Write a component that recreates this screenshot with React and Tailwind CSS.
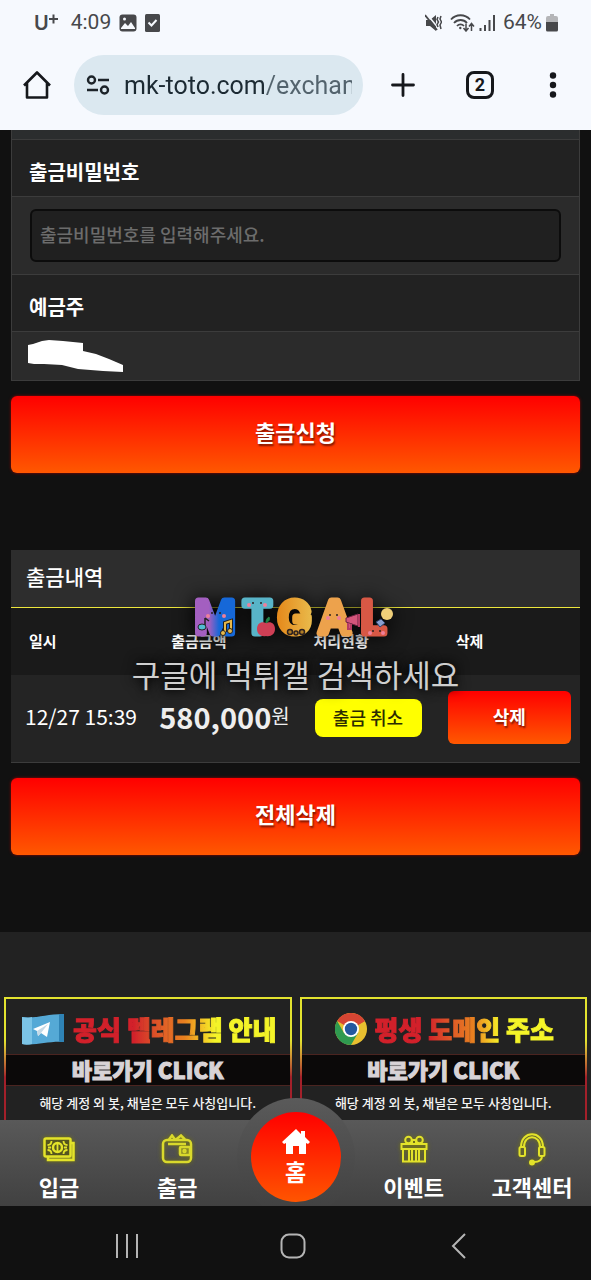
import { useState } from "react"

const panel = "border border-[#3c3c3c] bg-[#2b2b2b]"
const redButton =
    "w-full h-[77px] rounded-md bg-linear-to-b/srgb from-[#ff0000] to-[#ff5800] pb-1.5 text-white text-[22px] font-bold [text-shadow:1px_2px_2px_#7a1500] shadow-[0_0_3px_#a00000]"

function StatusBar() {
    return (
        <div className="flex h-[46px] items-center justify-between pl-[34px] pr-[33px] font-[Roboto,sans-serif] text-xl text-[#47484b]">
            <div className="flex items-center">
                <span className="font-[Inter,sans-serif] text-xl font-semibold leading-6">U</span>
                <svg width="10" height="20" viewBox="0 0 10 20" stroke="currentColor" strokeWidth="2">
                    <path d="M0 6h9M4.500 1.500v9" />
                </svg>
                <span className="ml-3 text-[21px]">4:09</span>
                <svg className="ml-2" width="18" height="18" viewBox="0 0 18 18">
                    <rect x="0.500" y="0.500" width="17" height="17" rx="3" fill="currentColor" />
                    <path d="M2 14l4-5 3 3 3-4 4 6v1H2z" fill="#f6f9fe" />
                    <circle cx="5.500" cy="5" r="1.500" fill="#f6f9fe" />
                </svg>
                <svg className="ml-2" width="15" height="18" viewBox="0 0 15 18">
                    <rect width="15" height="18" rx="1.500" fill="currentColor" />
                    <path d="M3.500 8.500l3 3 5-5.500" fill="none" stroke="#f6f9fe" strokeWidth="2" />
                </svg>
            </div>
            <div className="flex items-center">
                <svg width="17" height="18" viewBox="0 0 17 18" fill="currentColor">
                    <path d="M1 6h4l6-5v16l-6-5H1z" />
                    <path d="M1 -1l13 16" stroke="#f6f9fe" strokeWidth="1.500" />
                    <path d="M0 1l12 15" stroke="currentColor" strokeWidth="1.800" />
                    <path d="M13 3l-1 2.500L13.500 8 12 10.500l1 2.500M16 2l-1 3 1.500 3L15 11l1 4" fill="none" stroke="currentColor" strokeWidth="1.500" />
                </svg>
                <svg className="ml-2" width="25" height="18" viewBox="0 0 25 18" fill="none" stroke="currentColor" strokeWidth="1.800">
                    <path d="M1 5.500C6-.2 15-.2 20 5.500M4 9c3.600-4 9.500-4 13 0M7 12c2-2.200 5-2.200 7 0" />
                    <circle cx="10.300" cy="14" r="1.200" fill="currentColor" stroke="none" />
                    <path d="M16 9.500v7M13.500 14l2.500 3 2.500-3M21.500 17v-7M19 12.500l2.500-3 2.500 3" strokeWidth="1.500" />
                </svg>
                <svg className="ml-1" width="16" height="18" viewBox="0 0 16 18" stroke="currentColor" strokeWidth="2">
                    <path d="M1.500 17v-3M6 17V11M10.500 17V6M15 17V1" />
                </svg>
                <span className="ml-2 text-[21px]">64%</span>
                <svg className="ml-1" width="12" height="18" viewBox="0 0 12 18">
                    <path d="M4 0h4v2h2a2 2 0 0 1 2 2v4H0V4a2 2 0 0 1 2-2h2z" fill="#b4b5b8" />
                    <path d="M0 8h12v8a1.500 1.500 0 0 1-1.500 1.500h-9A1.500 1.500 0 0 1 0 16z" fill="currentColor" />
                </svg>
            </div>
        </div>
    )
}

function BrowserBar() {
    const [url, setUrl] = useState("mk-toto.com/exchange")

    return (
        <div className="flex items-center pt-[9px] pb-[15px] pl-[22px] pr-[30px] text-[#16181c]">
            <button aria-label="Home">
                <svg width="30" height="30" viewBox="0 0 30 30" fill="none" stroke="currentColor" strokeWidth="2.600" strokeLinejoin="round">
                    <path d="M2 15.500L15 2.500l13 13M5 13v14.500h20V13" />
                </svg>
            </button>
            <div className="ml-[22px] flex h-[60px] flex-1 items-center rounded-full bg-[#dbe8f0] pl-3 pr-[11px]">
                <svg width="24" height="22" viewBox="0 0 24 22" fill="none" stroke="#1c2329" strokeWidth="2.400" className="shrink-0">
                    <circle cx="5.500" cy="6" r="3.500" />
                    <path d="M12 6h11M1 16h11" />
                    <circle cx="18.500" cy="16" r="3.500" />
                </svg>
                <input
                    aria-label="Address"
                    className="ml-3.5 w-0 flex-1 bg-linear-to-r from-[#1c2a33] from-[142px] to-[#53636d] to-[142px] bg-clip-text pt-0.5 font-[Roboto,sans-serif] text-[25px] text-transparent outline-none"
                    value={url}
                    onChange={(e) => setUrl(e.target.value)}
                />
            </div>
            <button aria-label="New tab" className="ml-7">
                <svg width="24" height="24" viewBox="0 0 24 24" stroke="currentColor" strokeWidth="2.800" strokeLinecap="round">
                    <path d="M1.500 12h21M12 1.500v21" />
                </svg>
            </button>
            <button
                aria-label="Tabs"
                className="ml-[51px] h-7 w-7 rounded-lg border-[3px] border-current font-[Roboto,sans-serif] text-lg font-bold leading-5"
            >
                2
            </button>
            <button aria-label="Menu" className="ml-[51px] px-1">
                <svg width="8" height="26" viewBox="0 0 8 26" fill="currentColor">
                    <circle cx="4" cy="3.500" r="3.200" />
                    <circle cx="4" cy="13" r="3.200" />
                    <circle cx="4" cy="22.500" r="3.200" />
                </svg>
            </button>
        </div>
    )
}

function WithdrawForm() {
    const [password, setPassword] = useState("")

    return (
        <form onSubmit={(e) => e.preventDefault()}>
            <div className="border-x border-[#3c3c3c] bg-[#2b2d2e] h-[9px]"></div>
            <div className={panel}>
                <label htmlFor="password" className="flex h-14 items-center bg-[#222] px-[17px] pt-2 text-xl font-bold">
                    출금비밀번호
                </label>
                <div className="border-y border-[#3c3c3c] px-[18px] py-3">
                    <input
                        id="password"
                        type="password"
                        placeholder="출금비밀번호를 입력해주세요."
                        className="block h-[53px] w-full rounded-md border-2 border-[#0c0c0c] bg-[#202020] px-2 pb-1 text-lg outline-none placeholder:font-medium placeholder:text-[#6c6c6c]"
                        value={password}
                        onChange={(e) => setPassword(e.target.value)}
                    />
                </div>
                <div className="flex h-14 items-center bg-[#222] px-[17px] pt-2 text-xl font-bold">예금주</div>
                <div className="border-t border-[#3c3c3c] px-4 pt-2 pb-[7px]">
                    <svg width="95" height="33" viewBox="0 0 95 33" fill="#fff">
                        <path d="M0 5l5-1 9-3 7-1 14 1 20 2v8l13 3 13 5 14 6v7l-20-1-25-2-16-4-18-1H6l-6-1z" />
                    </svg>
                </div>
            </div>
            <button className={"mt-[15px] " + redButton}>출금신청</button>
        </form>
    )
}

function Mascots() {
    return (
        <svg width="204" height="60" viewBox="0 -5 204 60" className="overflow-visible drop-shadow-[0_0_10px_#000]" role="img" aria-label="MTGAL">
            <defs>
                <linearGradient id="m">
                    <stop offset="0.350" stopColor="#a35fc0" />
                    <stop offset="0.600" stopColor="#1668d8" />
                </linearGradient>
                <linearGradient id="g" x1="0" y1="0" x2="1" y2="0">
                    <stop offset="0" stopColor="#e58a1c" />
                    <stop offset="1" stopColor="#e9b94a" />
                </linearGradient>
            </defs>
            <g fontFamily="Inter, sans-serif" fontWeight="500" fontSize="44" strokeWidth="7" strokeLinejoin="round">
                <text x="1" y="39" fill="url(#m)" stroke="url(#m)">M</text>
                <text x="49" y="39" fill="#58b4c8" stroke="#58b4c8">T</text>
                <text x="84" y="39" fill="url(#g)" stroke="url(#g)">G</text>
                <text x="125" y="39" fill="#eda24c" stroke="#eda24c">A</text>
                <text x="167" y="39" fill="#d85845" stroke="#d85845">L</text>
            </g>
            {/* faces */}
            <g fill="#2b2020">
                <circle cx="18" cy="19" r="1" /><circle cx="26" cy="19" r="1" />
                <circle cx="59" cy="9" r="1" /><circle cx="67" cy="9" r="1" />
                <circle cx="136" cy="21" r="1" /><circle cx="143" cy="21" r="1" />
                <circle cx="179" cy="37" r="1" /><circle cx="186" cy="37" r="1" />
            </g>
            <g fill="#ee7f9a">
                <circle cx="14" cy="22" r="2" /><circle cx="30" cy="22" r="2" />
                <circle cx="55" cy="11" r="2" /><circle cx="71" cy="11" r="2" />
                <circle cx="134" cy="24" r="2" /><circle cx="145" cy="24" r="2" />
                <circle cx="176" cy="39" r="2" /><circle cx="189" cy="39" r="2" />
            </g>
            {/* notes, apple, wheels, megaphone, bulb */}
            <path d="M11 24v8M11 24l4 3" stroke="#222" strokeWidth="1.500" />
            <ellipse cx="8" cy="33" rx="4" ry="3" fill="#52bcd2" stroke="#222" />
            <path d="M31 38v-9l6-2v9" fill="none" stroke="#222" strokeWidth="4" />
            <path d="M31 38v-9l6-2v9" fill="none" stroke="#e9b94a" strokeWidth="2" />
            <circle cx="29" cy="39" r="2.500" fill="#e9b94a" stroke="#222" />
            <circle cx="36" cy="37" r="2.500" fill="#e9b94a" stroke="#222" />
            <path d="M72 29c-5-2-9 1-9 6s4 8 9 7c5 1 9-2 9-7s-4-8-9-6z" fill="#cf3f55" />
            <path d="M72 29c0-3 1-5 3-6 1 3 0 4-3 6" fill="#238347" stroke="#238347" />
            <g fill="#b07d24" stroke="#2b2020" strokeWidth="1.500">
                <circle cx="96" cy="38" r="2.500" /><circle cx="102" cy="39" r="2" /><circle cx="108" cy="38" r="2.500" />
            </g>
            <path d="M152 24l12-4v12l-12-4z" fill="#d4557b" stroke="#6b2342" />
            <path d="M154 29v6h3v-5M165 20v13" fill="#d4557b" stroke="#b63c63" strokeWidth="2" />
            <path d="M182 28l5-3 4 4-5 4z" fill="#8ba0d0" stroke="#30426f" />
            <circle cx="193" cy="20" r="6" fill="#efcf79" />
        </svg>
    )
}

function History() {
    return (
        <section className="relative mt-[77px]">
            <h2 className="flex h-[58px] items-center border-b border-[#ece63c] bg-[#2d2d2d] px-[15px] pb-1 text-[21px] font-medium">출금내역</h2>
            <table className="w-full table-fixed border-b border-[#3c3c3c] text-left">
                <thead className="bg-[#1a1a1a]">
                    <tr className="h-[67px] text-[15px]">
                        <th className="px-[18px] font-bold">일시</th>
                        <th className="px-[18px] font-bold whitespace-nowrap">출금금액</th>
                        <th className="px-[18px] font-bold whitespace-nowrap">처리현황</th>
                        <th className="px-[18px] font-bold">삭제</th>
                    </tr>
                </thead>
                <tbody className="bg-[#242424]">
                    <tr className="h-[87px] whitespace-nowrap">
                        <td className="pb-1 pl-3.5 text-[21px]">12/27 15:39</td>
                        <td className="pb-1 pl-1.5">
                            <div className="flex items-center text-[#eee]">
                                <span className="text-[29px] font-bold leading-8">580,000</span>
                                <span className="text-xl">원</span>
                            </div>
                        </td>
                        <td className="pl-[19px]">
                            <button className="h-[38px] w-[107px] rounded-lg bg-[#ffff00] pb-0.5 text-lg font-medium text-[#2b2b00]">출금 취소</button>
                        </td>
                        <td className="pl-2.5 pr-[9px] pb-0.5">
                            <button className="h-[53px] w-full rounded-md bg-linear-to-b/srgb from-[#ff0000] to-[#ff5800] pb-0.5 text-lg font-bold text-white [text-shadow:1px_2px_2px_#7a1500]">
                                삭제
                            </button>
                        </td>
                    </tr>
                </tbody>
            </table>
            <div className="pointer-events-none absolute inset-x-0 top-[39px] flex flex-col items-center">
                <Mascots />
                <p className="mt-0.5 text-[31px] leading-[46px] whitespace-nowrap text-[#cfcfcf] [text-shadow:0_0_8px_#000,0_0_14px_#000]">
                    구글에 먹튀갤 검색하세요
                </p>
            </div>
        </section>
    )
}

function TelegramFlag() {
    return (
        <svg width="44" height="32" viewBox="0 0 44 32">
            <path d="M1 4c14 2 24-3 42-3v28c-16-1-28 4-42 2z" fill="#55a9d6" />
            <path d="M1 4c4 1 7 1 10 0v27c-4 1-7 1-10 0z" fill="#7cc4e6" />
            <path d="M38 1h5v28h-5z" fill="#2f83b5" />
            <path d="M12 16l17-7-3 15-6-4-3 3-1-5z" fill="#fff" />
            <path d="M16 18l11-7-7 9-3 3z" fill="#c5d9e6" />
        </svg>
    )
}

function ChromeLogo() {
    return (
        <svg width="32" height="32" viewBox="0 0 32 32">
            <circle cx="16" cy="16" r="16" fill="#e8bf2f" />
            <path d="M16 16L2.140 8A16 16 0 0 1 29.860 8z" fill="#d64533" />
            <path d="M16 8h13.860L23 12z" fill="#d64533" />
            <path d="M2.140 8A16 16 0 0 0 16 32l7-12-7-4-7 4z" fill="#2f9a50" />
            <circle cx="16" cy="16" r="8" fill="#fff" />
            <circle cx="16" cy="16" r="6.200" fill="#24589f" />
        </svg>
    )
}

function BannerCard({ icon, title }) {
    return (
        <a href="#" className="block flex-1 bg-linear-to-b from-[#e3e32f] from-35% to-[#a3202a] to-65% px-0.5 pt-0.5">
            <div className="bg-[#222] text-center">
                <div className="flex h-[55px] items-center justify-center gap-2 pt-1.5 pl-0.5">
                    {icon}
                    <span className="bg-linear-to-r from-[#d2202a] from-30% via-[#e8801f] via-55% to-[#f4f428] to-70% bg-clip-text text-[26px] leading-9 font-black whitespace-nowrap text-transparent [-webkit-text-stroke:1px_transparent]">
                        {title}
                    </span>
                </div>
                <div className="border-y border-[#4b2420] bg-[#0b0909] pb-0.5 text-[22px] leading-7 font-black text-[#d8d3d6] [-webkit-text-stroke:1px_#d8d3d6]">바로가기 CLICK</div>
                <div className="h-[34px] pt-[7px] text-[13px] leading-5 font-medium whitespace-nowrap text-[#f4f4f4]">해당 계정 외 봇, 채널은 모두 사칭입니다.</div>
            </div>
        </a>
    )
}

function CashIcon() {
    return (
        <svg width="32" height="28" viewBox="0 0 32 28" fill="none" stroke="#e3e32a" strokeWidth="2.500">
            <path d="M27 8h3.500v17H5v-3" fill="#8a8a24" />
            <rect x="1.500" y="3.500" width="26" height="18" rx="1.500" fill="#55551f" />
            <circle cx="14.500" cy="12.500" r="4.500" />
            <path d="M14.500 9v7M4.500 10c3 0 4-1 4-4M24.500 10c-3 0-4-1-4-4M4.500 15c3 0 4 1 4 4M24.500 15c-3 0-4 1-4 4M5 12.500h3M21 12.500h3" strokeWidth="1.800" />
        </svg>
    )
}

function WalletIcon() {
    return (
        <svg width="32" height="30" viewBox="0 0 32 30" fill="none" stroke="#d9d92c" strokeWidth="2.500">
            <rect x="2" y="6" width="28" height="22" rx="4" />
            <path d="M7 10h18M8 5.500l3-4 3 4M15 5.500l5-4 4 4" />
            <rect x="19" y="13" width="10" height="8" rx="1" fill="#8a8a24" />
            <circle cx="23.500" cy="17" r="1" />
        </svg>
    )
}

function GiftIcon() {
    return (
        <svg width="28" height="28" viewBox="0 0 28 28" fill="none" stroke="#e3e32a" strokeWidth="2">
            <rect x="1.500" y="9" width="25" height="5" fill="#6d6d22" />
            <path d="M3 14v12.500h22V14M9 14v12M12 14v12M16 14v12M19 14v12M12 5h4v4h-4z" />
            <circle cx="8.500" cy="5" r="3.300" />
            <circle cx="19.500" cy="5" r="3.300" />
        </svg>
    )
}

function HeadsetIcon() {
    return (
        <svg width="28" height="34" viewBox="0 0 28 34" fill="none" stroke="#e3e32a" strokeWidth="2">
            <path d="M3 15C3-2 25-2 25 15M6 15C6 2 22 2 22 15" />
            <rect x="1.500" y="15" width="5.500" height="9" rx="1.500" />
            <rect x="21" y="15" width="5.500" height="9" rx="1.500" />
            <path d="M24 24c0 4-3 6-8 6" />
            <circle cx="14" cy="30.500" r="2" fill="#e3e32a" />
        </svg>
    )
}

function NavItem({ icon, label }) {
    return (
        <a href="#" className="flex flex-1 flex-col items-center pt-[11px]">
            <span className="flex h-9 items-center drop-shadow-[0_0_2px_#77770a]">{icon}</span>
            <span className="mt-[3px] text-[22px] leading-8 font-bold whitespace-nowrap">{label}</span>
        </a>
    )
}

function BottomNav() {
    return (
        <nav className="relative flex h-[86px] bg-linear-to-b from-[#595959] to-[#414141]">
            <NavItem icon={<CashIcon />} label="입금" />
            <NavItem icon={<WalletIcon />} label="출금" />
            <div className="flex-1"></div>
            <NavItem icon={<GiftIcon />} label="이벤트" />
            <NavItem icon={<HeadsetIcon />} label="고객센터" />
            {/* home button rises above the bar */}
            <div className="pointer-events-none absolute inset-x-0 -top-[22px] bottom-0 flex justify-center overflow-hidden">
                <div className="h-[118px] w-[118px] shrink-0 rounded-full bg-linear-to-b from-[#5a5a5a] to-[#404040] p-3.5">
                    <a href="#" className="pointer-events-auto flex h-[90px] flex-col items-center rounded-full bg-linear-to-b/srgb from-[#ff0000] to-[#ff5500] pt-[17px]">
                        <svg width="28" height="26" viewBox="0 0 28 26" fill="#fff">
                            <path d="M14 0L0 13l2 2 2-1v11h7v-8h6v8h7V14l2 1 2-2-5-5V2h-4v3z" />
                        </svg>
                        <span className="text-[23px] leading-8 font-bold">홈</span>
                    </a>
                </div>
            </div>
        </nav>
    )
}

function SystemNav() {
    return (
        <div className="grid h-[74px] grid-cols-3 place-items-center bg-[#111] pl-11 pr-[49px] pt-1.5 text-[#b5b5b5]">
            <button aria-label="Recents">
                <svg width="24" height="24" viewBox="0 0 24 24" stroke="currentColor" strokeWidth="2">
                    <path d="M2 0v24M12 0v24M22 0v24" />
                </svg>
            </button>
            <button aria-label="Home screen">
                <svg width="26" height="26" viewBox="0 0 26 26" fill="none" stroke="currentColor" strokeWidth="2">
                    <rect x="1.500" y="1.500" width="23" height="23" rx="7.500" />
                </svg>
            </button>
            <button aria-label="Back">
                <svg width="16" height="26" viewBox="0 0 16 26" fill="none" stroke="currentColor" strokeWidth="2">
                    <path d="M14 1L2 13l12 12" />
                </svg>
            </button>
        </div>
    )
}

export default function App() {
    return (
        <div className="min-h-screen bg-[#111] font-['Noto_Sans_CJK_KR',sans-serif] text-white">
            <header className="bg-[#f6f9fe]">
                <StatusBar />
                <BrowserBar />
            </header>

            <main className="px-[11px] pb-[77px]">
                <WithdrawForm />
                <History />
                <button className={"mt-[15px] " + redButton}>전체삭제</button>
            </main>

            <footer>
                <div className="flex gap-2 bg-[#222] px-1 pt-[65px]">
                    <BannerCard icon={<TelegramFlag />} title="공식 텔레그램 안내" />
                    <BannerCard icon={<ChromeLogo />} title="평생 도메인 주소" />
                </div>
                <BottomNav />
                <SystemNav />
            </footer>
        </div>
    )
}
